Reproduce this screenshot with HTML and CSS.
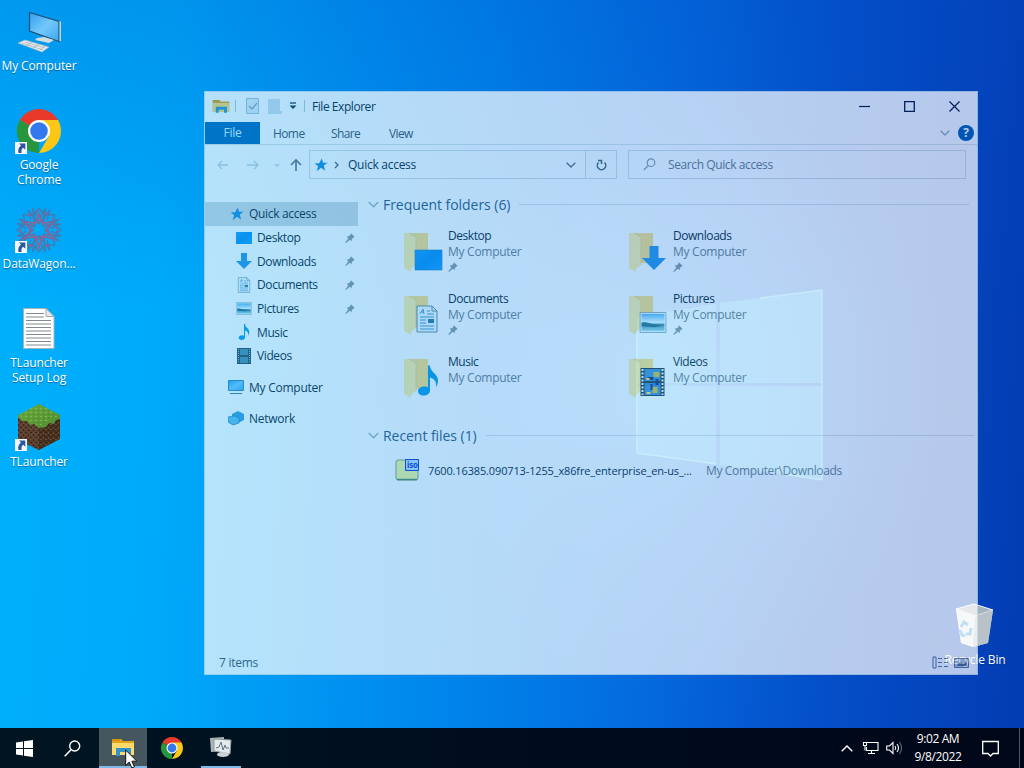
FILE: index.html
```html
<!DOCTYPE html>
<html lang="en">
<head>
    <meta charset="UTF-8">
    <meta name="viewport" content="width=device-width, initial-scale=1.0">
    <title>File Explorer</title>
    <link rel="stylesheet" href="styles.css">
</head>
<body>
    <!-- Shared icons -->
    <svg class="sprite">
        <defs>
            <linearGradient id="blue" x1="0" y1="0" x2="1" y2="1">
                <stop offset="0" stop-color="#1b9cf2"/><stop offset=".5" stop-color="#0b8ef0"/><stop offset="1" stop-color="#1ba0fa"/>
            </linearGradient>
            <linearGradient id="sky" x1="0" y1="0" x2="0" y2="1">
                <stop offset="0" stop-color="#5eb0ee"/><stop offset=".5" stop-color="#e0f8fc"/><stop offset=".62" stop-color="#4a8ca6"/><stop offset="1" stop-color="#9fdcec"/>
            </linearGradient>
            <linearGradient id="screen" x1="0" y1="0" x2="1" y2="1">
                <stop offset="0" stop-color="#2e9eee"/><stop offset=".5" stop-color="#74c8fa"/><stop offset="1" stop-color="#3aa6f0"/>
            </linearGradient>
            <linearGradient id="grass" x1="0" y1="0" x2="1" y2="1">
                <stop offset="0" stop-color="#6cac40"/><stop offset="1" stop-color="#508c30"/>
            </linearGradient>
            <pattern id="dirt" width="5" height="5" patternUnits="userSpaceOnUse">
                <path d="M0 0h2v1H0zM3 3h1v2H3z" fill="#6d4b36"/><path d="M3 0h1v2H3zM0 3h2v1H0z" fill="#38261b"/>
            </pattern>
            <pattern id="turf" width="5" height="4" patternUnits="userSpaceOnUse">
                <path d="M0 0h2v1H0z" fill="#7cba4c"/><path d="M3 2h1v1H3z" fill="#467e2a"/>
            </pattern>
        </defs>
        <symbol id="chrome" viewBox="0 0 48 48">
            <path d="M24 24 4.900 13A22 22 0 0 1 43 13z" fill="#e8392b"/>
            <path d="M24 24v22A22 22 0 0 1 4.900 13z" fill="#28963c"/>
            <path d="M24 13h19A22 22 0 0 1 24 46l10-17z" fill="#fbc815"/>
            <circle cx="24" cy="24" r="11" fill="#fff"/><circle cx="24" cy="24" r="8.800" fill="#3478ee"/>
        </symbol>
        <symbol id="shortcut" viewBox="0 0 12 12">
            <path d="M0 0h12v12H0z" fill="#f4f8fc"/>
            <path d="M4 1.500h6.300v6.300L8.200 5.700C6.300 7 6.300 8.700 6.600 11H3.500C2.700 8 3.700 5.300 6 3.600z" fill="#2c56a0"/>
        </symbol>
        <symbol id="pin" viewBox="0 0 10 10">
            <path d="M6 .3 9.700 4 8.600 4.500 6.900 6.100 6.600 8.300 4.800 6.800 1 9.900 .3 9.300 3.300 5.400 1.700 3.500 4 3.200 5.500 1.500z" fill="#8b979d"/>
        </symbol>
        <symbol id="star" viewBox="0 0 14 14">
            <path d="m7.800.5 1.200 4.300 4.700-.1-3.900 2.800 1.300 5.200-4-2.900-4.400 3.400 1.500-5L.6 5.500l4.600-.3z" fill="#1a8cd8"/>
        </symbol>
        <symbol id="folder" viewBox="0 0 40 42">
            <path d="M4 2h21v30H9z" fill="#fbdf80"/><path d="M1 2h5l7 4v28l-5 4v3L1 37z" fill="#fff0a4"/>
            <path d="m6 2 7 4v28" fill="none" stroke="#e8cf80" stroke-width=".8"/>
        </symbol>
        <symbol id="arrow" viewBox="0 0 16 16">
            <path d="M5 0h6v8h5l-8 8-8-8h5z" fill="#2a92e2"/>
        </symbol>
        <symbol id="note" viewBox="0 0 20 30">
            <path d="M10 0h2c0 7 8 8 8 15 0 3-1 5-2 7 1-6-2-9-6-10v13c0 3-3 5-6.500 5S0 28 0 25.500 3 21 6.500 21c1.500 0 2.500.3 3.500 1z" fill="#0c9ae6"/>
        </symbol>
        <symbol id="doc" viewBox="0 0 22 28">
            <path d="M1 1h15l5 5v21H1z" fill="#f2fafc" stroke="#6d8894"/><path d="M16 1v5h5" fill="none" stroke="#6d8894"/>
            <path d="m4 9 3-5 1 5M5 7h3M11 6h3M11 9h7M4 12h14M4 15h6M4 18h6M4 21h14M4 24h14" fill="none" stroke="#4a98c8"/><path d="M12 14h6v4h-6z" fill="#33789c"/>
        </symbol>
        <symbol id="picture" viewBox="0 0 28 22">
            <path d="M.5.5h27v21H.5z" fill="#f8fdff" stroke="#8fa8b4"/><path d="M2 2h24v18H2z" fill="url(#sky)"/><path d="M2 11c6-1 8 2 24 3l-10 2-14-1z" fill="#2a6b80"/>
        </symbol>
        <symbol id="film" viewBox="0 0 24 28">
            <path d="M0 0h24v28H0z" fill="#27333e"/><path d="M4 1h16v12H4zM4 15h16v12H4z" fill="#3f88cc"/>
            <path d="M2 1v26M22 1v26" stroke="#f4faff" stroke-width="2" stroke-dasharray="2 1.500"/>
            <path d="M13 4h6v5h-6zM12 19h5v6h-5z" fill="#ccb838"/><path d="M7 9h6v3H7zM10 16h2v6h-2zM15 11h3v6h-3z" fill="#142f70"/><path d="M6 10h3v2H6zM6 24h4v2H6z" fill="#ffd95b"/>
        </symbol>
        <symbol id="explorer" viewBox="0 0 24 20">
            <path d="M1 2h9l2 2h11v14H1z" fill="#e3a51d"/><path d="M1 6h22v12H1z" fill="#ffd969"/><path d="M1 2h8v2H1z" fill="#d8910c"/>
            <path d="M5 11h15v8h-4v-4H9v4H5z" fill="#3193cb"/>
        </symbol>
        <symbol id="down" viewBox="0 0 10 6"><path d="m.7.7 4.300 4.300L9.300.7" fill="none" stroke="currentColor" stroke-width="1.300"/></symbol>
    </svg>

    <div class="desktop">
        <!-- Light logo on the wallpaper -->
        <svg class="wallpaper" viewBox="0 0 1024 728">
            <defs>
                <radialGradient id="glow" gradientUnits="userSpaceOnUse" cx="650" cy="385" r="300">
                    <stop offset="0" stop-color="#10a0ff" stop-opacity=".65"/><stop offset=".45" stop-color="#0e8cf8" stop-opacity=".4"/><stop offset="1" stop-color="#0e7cf0" stop-opacity="0"/>
                </radialGradient>
            </defs>
            <path d="M0 0h1024v728H0z" fill="url(#glow)"/>
            <g class="panes">
                <path d="m637 317 79-13v79h-79zM720 303l102-13v93H720zM637 386h79v78l-79-11zM720 386h102v94l-102-15z"/>
            </g>
            <path class="pane-edge" d="m760 298 62-8v190l-40-6M637 332v121l79 11"/>
        </svg>

        <!-- Desktop icons -->
        <div class="shortcut my-computer">
            <svg width="48" height="48" viewBox="0 0 48 48">
                <path d="m14.500 4.500 29.500 9v20L14.500 23z" fill="url(#screen)" stroke="#23516f" stroke-width="1.200"/><path d="m44.500 13 1.500.5V33h-1.500z" fill="#c8d4da"/>
                <path d="m22 30 7-1 10 3-5 3-14-3z" fill="#d4dce0"/><path d="m3 35 7-3 24 7-7 5z" fill="#e9eef0" stroke="#9eb2be" stroke-width=".7"/>
                <path d="m7 35 21 7M10 34l20 6M11 38l6-4M18 40l6-4M25 42l5-4" stroke="#a2b2bc" stroke-width=".8"/>
            </svg>
            <span>My Computer</span>
        </div>
        <div class="shortcut google-chrome">
            <svg width="48" height="48"><use href="#chrome" width="48" height="48"/><use href="#shortcut" y="35" width="12" height="12"/></svg>
            <span>Google<br>Chrome</span>
        </div>
        <div class="shortcut datawagon">
            <svg width="48" height="48" viewBox="0 0 48 48">
                <g fill="none" stroke="#4878b0" stroke-width="1.300">
                    <path id="petal" d="M24 18 18 10 24 2l6 8zM18 10l-5-6 3 10M30 10l5-6-3 10"/>
                    <use href="#petal" transform="rotate(45 24 24)"/><use href="#petal" transform="rotate(90 24 24)"/><use href="#petal" transform="rotate(135 24 24)"/><use href="#petal" transform="rotate(180 24 24)"/><use href="#petal" transform="rotate(225 24 24)"/><use href="#petal" transform="rotate(270 24 24)"/><use href="#petal" transform="rotate(315 24 24)"/>
                </g>
                <g fill="none" stroke="#8c6494" stroke-width="1.700">
                    <path d="m24 8 4 9 10-1-6 8 6 8-10-1-4 9-4-9-10 1 6-8-6-8 10 1z"/><path d="m24 14 9 5v10l-9 5-9-5V19z" stroke-dasharray="3 1.500"/>
                    <circle cx="24" cy="24" r="18" stroke-dasharray="3 6"/><circle cx="24" cy="24" r="7" stroke-dasharray="2 2"/>
                </g>
                <use href="#shortcut" y="35" width="12" height="12"/>
            </svg>
            <span>DataWagon...</span>
        </div>
        <div class="shortcut setup-log">
            <svg width="48" height="48" viewBox="0 0 48 48">
                <path d="M8.500 3.500H31l8 8v32H8.500z" fill="#fff" stroke="#a4b4bc"/><path d="M31 3.500v8h8z" fill="#e4ecf2" stroke="#a0a8b0"/>
                <path d="M11 8.500h18M11 12h18M11 15.500h25M11 19h25M11 22.500h25M11 26h25M11 29.500h25M11 33h25M11 36.500h25M11 40h25" stroke="#808a90"/>
            </svg>
            <span>TLauncher<br>Setup Log</span>
        </div>
        <div class="shortcut tlauncher">
            <svg width="48" height="48" viewBox="0 0 48 48">
                <path d="m3 12 21 10v24L3 36z" fill="#5b4030"/><path d="m45 12-21 10v24l21-11z" fill="#48301f"/><path d="m3 12 21 10 21-10v23L24 46 3 36z" fill="url(#dirt)"/>
                <path d="M24 0 45 11v4l-4 1-2 4-5-1-3 4-7 1-5-4-4 1-3-4-5 0-4-4v-2z" fill="url(#grass)"/><path d="M24 0 45 11 24 22 3 11z" fill="url(#turf)"/>
                <use href="#shortcut" y="35" width="12" height="12"/>
            </svg>
            <span>TLauncher</span>
        </div>
        <div class="shortcut recycle-bin">
            <svg width="48" height="48" viewBox="0 0 48 48">
                <path d="m5 7 18-5 19 6-5 33-15 4-12-4z" fill="#c3ccd4"/><path d="m5 7 18-5 19 6-18 6z" fill="#a7b3be" stroke="#f3f7fa"/><path d="m5 7 19 7-2 31-12-4z" fill="#e4eaee"/>
                <path d="m24 14 18-6-5 33-15 4z" fill="#bac2c9"/>
                <g fill="none" stroke="#2496dc" stroke-width="3"><path d="m10 25 3-5 4 3M20 26l-1 6-4 0M9 28l2 5 3 1"/></g>
            </svg>
            <span>Recycle Bin</span>
        </div>

        <!-- Explorer window -->
        <div class="window">
            <div class="title-bar">
                <svg class="title-icon" width="18" height="16"><use href="#explorer" width="18" height="16"/></svg>
                <i class="divider"></i>
                <svg class="props" width="13" height="16" viewBox="0 0 13 16"><path d="M.5.5h12v15H.5z" fill="#e0edf4" stroke="#a8c0cf"/><path d="m3 8 3 3 5-6" fill="none" stroke="#8aabc2" stroke-width="1.500"/></svg>
                <svg class="new" width="14" height="16" viewBox="0 0 14 16"><path d="M0 1h12v12h2v3H0z" fill="#d0e0ea"/></svg>
                <svg class="customize" width="8" height="8" viewBox="0 0 8 8"><path d="M1 1h6" stroke="#103450" stroke-width="1.300"/><path d="M.5 3.500h7L4 7z" fill="#103450"/></svg>
                <i class="divider second"></i>
                <span class="title">File Explorer</span>
                <div class="controls">
                    <svg width="11" height="11"><path d="M0 5.500h11" stroke="#001030" stroke-width="1.200"/></svg>
                    <svg width="11" height="11"><path d="M.7.7h9.600v9.600H.7z" fill="none" stroke="#001030" stroke-width="1.300"/></svg>
                    <svg width="11" height="11"><path d="m.5.5 10 10M10.500.5l-10 10" stroke="#001030" stroke-width="1.200"/></svg>
                </div>
            </div>
            <div class="tabs">
                <span class="tab file">File</span>
                <span class="tab home">Home</span>
                <span class="tab share">Share</span>
                <span class="tab view">View</span>
                <svg class="expand" width="10" height="6"><use href="#down" width="10" height="6"/></svg>
                <span class="help">?</span>
            </div>
            <div class="address-row">
                <svg class="nav-arrows" width="100" height="16" viewBox="0 0 100 16">
                    <g fill="none" stroke="#c2d2db" stroke-width="1.300"><path d="M23 8H13m4-4-4 4 4 4M42 8h11m-4-4 4 4-4 4"/><path d="m70 7 2 2 2-2"/></g>
                    <path d="M91 14V3m-5 5 5-5 5 5" fill="none" stroke="#65777f" stroke-width="1.700"/>
                </svg>
                <div class="address">
                    <svg class="address-star" width="14" height="14"><use href="#star" width="14" height="14"/></svg>
                    <svg class="crumb" width="5" height="8" viewBox="0 0 5 8"><path d="m1 1 3 3-3 3" fill="none" stroke="#4c606c" stroke-width="1.300"/></svg>
                    <span>Quick access</span>
                    <svg class="history" width="10" height="6"><use href="#down" width="10" height="6"/></svg>
                    <div class="refresh">
                        <svg width="11" height="12" viewBox="0 0 11 12"><path d="M2.500 3.500A4.200 4.200 0 1 0 8.500 3.500M5.500 5V1.500H2" fill="none" stroke="#48606c" stroke-width="1.500"/></svg>
                    </div>
                </div>
                <div class="search">
                    <svg width="13" height="13" viewBox="0 0 13 13"><circle cx="8" cy="4.700" r="3.800" fill="none" stroke="#8c9aa8" stroke-width="1.200"/><path d="M5.300 7.500.8 12" stroke="#8c9aa8" stroke-width="1.200"/></svg>
                    <span>Search Quick access</span>
                </div>
            </div>

            <div class="main">
                <ul class="sidebar">
                    <li class="selected"><svg width="14" height="14"><use href="#star" width="14" height="14"/></svg>Quick access</li>
                    <li class="child"><svg width="16" height="12"><path d="M0 0h16v12H0z" fill="url(#blue)"/></svg>Desktop<svg class="side-pin" width="10" height="10"><use href="#pin"/></svg></li>
                    <li class="child"><svg width="16" height="16"><use href="#arrow"/></svg>Downloads<svg class="side-pin" width="10" height="10"><use href="#pin"/></svg></li>
                    <li class="child"><svg width="16" height="16"><use href="#doc"/></svg>Documents<svg class="side-pin" width="10" height="10"><use href="#pin"/></svg></li>
                    <li class="child"><svg width="16" height="13"><use href="#picture"/></svg>Pictures<svg class="side-pin" width="10" height="10"><use href="#pin"/></svg></li>
                    <li class="child"><svg width="16" height="16"><use href="#note"/></svg>Music</li>
                    <li class="child"><svg width="16" height="16" viewBox="0 0 16 16"><path d="M1 0h14v16H1z" fill="#2e4b5c"/><path d="M4 1h8v6H4zM4 9h8v6H4z" fill="#4f8aa8"/><path d="M2.500 1v14M13.500 1v14" stroke="#9fbccb" stroke-dasharray="1 1"/></svg>Videos</li>
                    <li class="root"><svg width="16" height="16" viewBox="0 0 16 16"><path d="M.5 1.500h15v10H.5z" fill="url(#screen)" stroke="#3085b8"/><path d="M2 14.500h12" stroke="#437b9c"/></svg>My Computer</li>
                    <li class="root"><svg width="16" height="16" viewBox="0 0 16 16"><path d="m4 4 6-3 6 3v6l-6 3-6-2z" fill="#3b9cd9"/><path d="m0 7 6-1 5 2v5l-6 2-5-3z" fill="#65bdec" stroke="#2787be" stroke-width=".8"/></svg>Network</li>
                </ul>

                <div class="content">
                    <div class="group-title"><svg width="11" height="7"><use href="#down"/></svg>Frequent folders (6)<i class="short"></i></div>
                    <div class="folders">
                        <div class="folder">
                            <svg width="40" height="42"><use href="#folder"/><path d="M12 19h27v20H12z" fill="url(#blue)" stroke="#2879b0" stroke-width=".6"/></svg>
                            <div><b>Desktop</b><span>My Computer</span><svg width="10" height="10"><use href="#pin"/></svg></div>
                        </div>
                        <div class="folder">
                            <svg width="40" height="42"><use href="#folder"/><use href="#arrow" x="14" y="15" width="24" height="24"/></svg>
                            <div><b>Downloads</b><span>My Computer</span><svg width="10" height="10"><use href="#pin"/></svg></div>
                        </div>
                        <div class="folder">
                            <svg width="40" height="42"><use href="#folder"/><use href="#doc" x="13" y="11" width="22" height="28"/></svg>
                            <div><b>Documents</b><span>My Computer</span><svg width="10" height="10"><use href="#pin"/></svg></div>
                        </div>
                        <div class="folder">
                            <svg width="40" height="42"><use href="#folder"/><use href="#picture" x="11" y="18" width="28" height="21"/></svg>
                            <div><b>Pictures</b><span>My Computer</span><svg width="10" height="10"><use href="#pin"/></svg></div>
                        </div>
                        <div class="folder">
                            <svg width="40" height="42"><use href="#folder"/><use href="#note" x="15" y="8" width="20" height="31"/></svg>
                            <div><b>Music</b><span>My Computer</span></div>
                        </div>
                        <div class="folder">
                            <svg width="40" height="42"><use href="#folder"/><use href="#film" x="12" y="11" width="25" height="28"/></svg>
                            <div><b>Videos</b><span>My Computer</span></div>
                        </div>
                    </div>
                    <div class="group-title"><svg width="11" height="7"><use href="#down"/></svg>Recent files (1)<i></i></div>
                    <div class="recent">
                        <svg width="24" height="22" viewBox="0 0 24 22">
                            <path d="M1 3q0-2 2-2h20v18q0 2-2 2H3q-2 0-2-2z" fill="#f2fa9c" stroke="#8ca070"/><path d="M2 20.500h20" stroke="#5c8468" stroke-width="1.500"/>
                            <path d="M10.500.5h13v11h-13z" fill="#bcdcff" stroke="#1238c8"/><text class="iso" x="12" y="9">iso</text>
                        </svg>
                        <span class="file-name">7600.16385.090713-1255_x86fre_enterprise_en-us_...</span>
                        <span class="file-path">My Computer\Downloads</span>
                    </div>
                </div>
            </div>
            <div class="status">
                <span>7 items</span>
                <svg width="38" height="14" viewBox="0 0 38 14">
                    <path d="M1 1h3v11H1zM6 2.500h4M12 2.500h4M6 6.500h4M12 6.500h4M6 10.500h4M12 10.500h4" fill="none" stroke="#5a708e"/>
                    <path d="M22.500 2.500h14v9h-14z" fill="#b4c6de" stroke="#5a708e"/><path d="m24 10 5-4 3 2 3-3v5z" fill="#4d6688"/>
                </svg>
            </div>
        </div>
    </div>

    <div class="taskbar">
        <div class="task"><svg width="17" height="17" viewBox="0 0 17 17"><path d="m0 2.500 7-1V8H0zM8 1.300 17 0v8H8zM0 9h7v6.500l-7-1zM8 9h9v8l-9-1.300z" fill="#fff"/></svg></div>
        <div class="task search-task"><svg width="17" height="17" viewBox="0 0 17 17"><circle cx="10.700" cy="6" r="5" fill="none" stroke="#fff" stroke-width="1.400"/><path d="m7 9.700-6.300 6.600" stroke="#fff" stroke-width="1.500"/></svg></div>
        <div class="task open current"><svg width="24" height="20"><use href="#explorer"/></svg></div>
        <div class="task"><svg width="24" height="24"><use href="#chrome"/></svg></div>
        <div class="task open">
            <svg width="24" height="24" viewBox="0 0 24 24">
                <path d="m1 3 14-1v14L2 17z" fill="#aab4b8"/><path d="m5 4 17 1-1 14-16-3z" fill="#e4eaec" stroke="#8d999f"/>
                <path d="m7 13 3-1 2-5 2 8 2-5 1 3 3 0" fill="none" stroke="#5d767f"/><ellipse cx="14" cy="19.500" rx="6" ry="2.500" fill="#cad2d4"/>
            </svg>
        </div>
        <div class="tray">
            <svg width="12" height="7" viewBox="0 0 12 7"><path d="m.7 6.300 5.300-5.300 5.300 5.300" fill="none" stroke="#fff" stroke-width="1.400"/></svg>
            <svg class="network" width="17" height="14" viewBox="0 0 17 14"><path d="M5 1.500h11v8H4.500V6M6 12.500h7M9.500 10v3M1.500 1.500h3v3h-3zM3 4.500v5" fill="none" stroke="#fff" stroke-width="1.100"/></svg>
            <svg class="sound" width="17" height="14" viewBox="0 0 17 14"><path d="M.7 5h2.800L7 1.500v11L3.500 9H.7z" fill="none" stroke="#fff" stroke-width="1.100"/><path d="M9 5q1.500 2 0 4M11 3q3 4 0 8" fill="none" stroke="#fff" stroke-width="1.100"/><path d="M13.500 1q4 6 0 12" fill="none" stroke="#68778a"/></svg>
            <div class="clock">9:02 AM<br>9/8/2022</div>
            <svg class="action" width="17" height="17" viewBox="0 0 17 17"><path d="M.7 1.500h15.600v12H11L8.500 16 6 13.500H.7z" fill="none" stroke="#fff" stroke-width="1.300"/></svg>
            <i class="show-desktop"></i>
        </div>
    </div>

    <svg class="cursor" width="13" height="20" viewBox="0 0 13 20"><path d="M.7 1v15.500l3.600-3.400 2.500 5.800 2.600-1.100-2.500-5.600h5z" fill="#fff" stroke="#111"/></svg>
</body>
</html>
```
FILE: styles.css
```css
/* General */
* {
    box-sizing: border-box;
}

body {
    margin: 0;
    width: 1024px;
    height: 768px;
    overflow: hidden;
    display: flex;
    flex-direction: column;
    font-family: "Open Sans", "Noto Sans", sans-serif;
    font-size: 12px;
}

svg {
    display: block;
    flex: none;
}

.sprite {
    position: absolute;
    width: 0;
    height: 0;
}

/* Desktop */
.desktop {
    position: relative;
    height: 728px;
    background:
        linear-gradient(to bottom, rgba(0, 70, 190, .22), rgba(0, 100, 220, 0) 42%),
        linear-gradient(93deg, #00b0fc 0%, #00aafa 17%, #009af4 29%, #0082ea 48%, #046ade 64%, #0450ca 80%, #0442ba 94%, #033cb2 100%);
}

.wallpaper {
    position: absolute;
    inset: 0;
    width: 1024px;
    height: 728px;
}

.panes {
    fill: #28b8ff;
    fill-opacity: .6;
}

.pane-edge {
    fill: none;
    stroke: #70f0ff;
    stroke-width: 1.5;
    stroke-opacity: .5;
}

.shortcut {
    position: absolute;
    left: 0;
    width: 78px;
    display: flex;
    flex-direction: column;
    align-items: center;
    gap: 2px;
    color: #fff;
    line-height: 15px;
    letter-spacing: -.15px;
    text-align: center;
    white-space: nowrap;
    text-shadow: 0 1px 1px rgba(0, 40, 90, .5);
}

.my-computer { top: 8px; }
.google-chrome { top: 107px; }
.datawagon { top: 206px; }
.setup-log { top: 305px; }
.tlauncher { top: 404px; }
.recycle-bin { left: 936px; top: 602px; }

/* Window */
.window {
    position: absolute;
    left: 204px;
    top: 91px;
    width: 774px;
    height: 584px;
    display: flex;
    flex-direction: column;
    background: #fff;
    border: 1px solid #d0e2ec;
    color: #0e2430;
    letter-spacing: -.27px;
    opacity: .71;
}

.title-bar {
    height: 30px;
    display: flex;
    align-items: center;
    padding: 0 17px 2px 7px;
}

.divider {
    width: 1px;
    height: 12px;
    margin-left: 5px;
    background: #b4c8d4;
}

.props { margin-left: 10px; }
.new { margin-left: 9px; }
.customize { margin-left: 7px; }
.divider.second { margin-left: 7px; }

.title {
    margin-left: 7px;
    letter-spacing: -.45px;
}

.controls {
    margin-left: auto;
    display: flex;
    gap: 34px;
}

.tabs {
    height: 23px;
    display: flex;
    align-items: center;
    padding-right: 3px;
    border-bottom: 1px solid #d8e2e7;
    color: #3c4e5c;
}

.tab {
    letter-spacing: -.6px;
}

.tab.file {
    width: 55px;
    line-height: 22px;
    background: #0067b8;
    color: #d8efff;
    text-align: center;
    letter-spacing: -.3px;
}

.home {
    width: 30px;
    margin-left: 13px;
}

.share {
    width: 30px;
    margin-left: 28px;
}

.view { margin-left: 28px; }

.expand {
    margin-left: auto;
    color: #98a9b8;
}

.help {
    width: 16px;
    height: 16px;
    margin-left: 8px;
    border-radius: 50%;
    background: #005cae;
    color: #fff;
    font-weight: 700;
    line-height: 16px;
    text-align: center;
}

.address-row {
    height: 29px;
    margin-top: 5px;
    display: flex;
    align-items: center;
}

.nav-arrows { margin-right: 4px; }

.address,
.search {
    height: 29px;
    display: flex;
    align-items: center;
    border: 1px solid #d2dce2;
}

.address {
    width: 308px;
    padding-left: 4px;
}

.crumb { margin: 0 9px 0 6px; }

.history {
    margin-left: auto;
    color: #5a6a74;
}

.refresh {
    width: 31px;
    height: 27px;
    margin-left: 9px;
    display: flex;
    align-items: center;
    justify-content: center;
    border-left: 1px solid #d2dce2;
}

.search {
    width: 338px;
    margin-left: 11px;
    padding-left: 14px;
    gap: 12px;
    color: #6a7680;
    letter-spacing: -.4px;
}

.main {
    flex: 1;
    display: flex;
}

/* Sidebar */
.sidebar {
    width: 153px;
    margin: 0;
    padding: 23px 0 0;
    list-style: none;
}

.sidebar li {
    height: 23.7px;
    display: flex;
    align-items: center;
    gap: 5px;
    padding-left: 31px;
    letter-spacing: -.4px;
}

.sidebar .selected {
    padding-left: 25px;
    background: #cdd8de;
    letter-spacing: -.33px;
}

.sidebar .root {
    padding-left: 23px;
    margin-top: 7.5px;
    letter-spacing: -.25px;
}

.sidebar .side-pin {
    margin-left: auto;
    margin-right: 3px;
}

/* Content */
.content {
    flex: 1;
    padding: 14px 3px 0 10px;
}

.group-title {
    height: 22px;
    display: flex;
    align-items: center;
    gap: 4px;
    color: #33567a;
    font-size: 14px;
    letter-spacing: -.05px;
    white-space: nowrap;
}

.group-title svg {
    color: #a0afb9;
}

.group-title i {
    flex: 1;
    height: 1px;
    margin-left: 5px;
    background: #d8e1e8;
}

.group-title .short {
    margin-right: 5px;
}

.folders {
    display: grid;
    grid-template-columns: 225px 225px;
    grid-auto-rows: 63px;
    padding: 13px 0 7px 35px;
}

.folder {
    display: flex;
    gap: 5px;
    line-height: 16px;
}

.folder > svg {
    margin-top: 3px;
}

.folder b,
.folder span {
    display: block;
    font-weight: 400;
}

.folder b {
    letter-spacing: -.45px;
}

.folder span,
.file-path {
    color: #6e7c86;
}

.folder div svg {
    margin-top: 2px;
}

.recent {
    display: flex;
    align-items: center;
    height: 24px;
    margin: 12px 0 0 27px;
    white-space: nowrap;
}

.iso {
    fill: #1238c8;
    font-size: 8px;
    font-weight: 700;
}

.file-name {
    width: 264px;
    margin: 0 14px 0 9px;
    font-size: 11px;
    letter-spacing: -.14px;
}

.file-path {
    letter-spacing: -.36px;
}

.status {
    height: 23px;
    display: flex;
    align-items: center;
    justify-content: space-between;
    padding: 0 7px 0 14px;
    color: #3c5060;
}

/* Taskbar */
.taskbar {
    height: 40px;
    display: flex;
    background: linear-gradient(to right, #001521, #000b1e 60%, #000718);
}

.task {
    width: 48px;
    margin-right: 1px;
    display: flex;
    align-items: center;
    justify-content: center;
}

.search-task {
    padding-right: 2px;
}

.task.open {
    width: 40px;
    margin-left: 4px;
    border-bottom: 2px solid #7fb9ea;
}

.task.current {
    width: 48px;
    margin-left: 1px;
    background: #45565f;
}

.tray {
    margin-left: auto;
    display: flex;
    align-items: center;
    color: #fff;
}

.network { margin-left: 9px; }
.sound { margin-left: 7px; }

.clock {
    width: 70px;
    line-height: 18px;
    text-align: center;
    letter-spacing: -.4px;
}

.action { margin-left: 9px; }

.show-desktop {
    width: 1px;
    height: 40px;
    margin-left: 20px;
    margin-right: 4px;
    background: #4b5664;
}

.cursor {
    position: absolute;
    left: 125px;
    top: 749px;
}
```
